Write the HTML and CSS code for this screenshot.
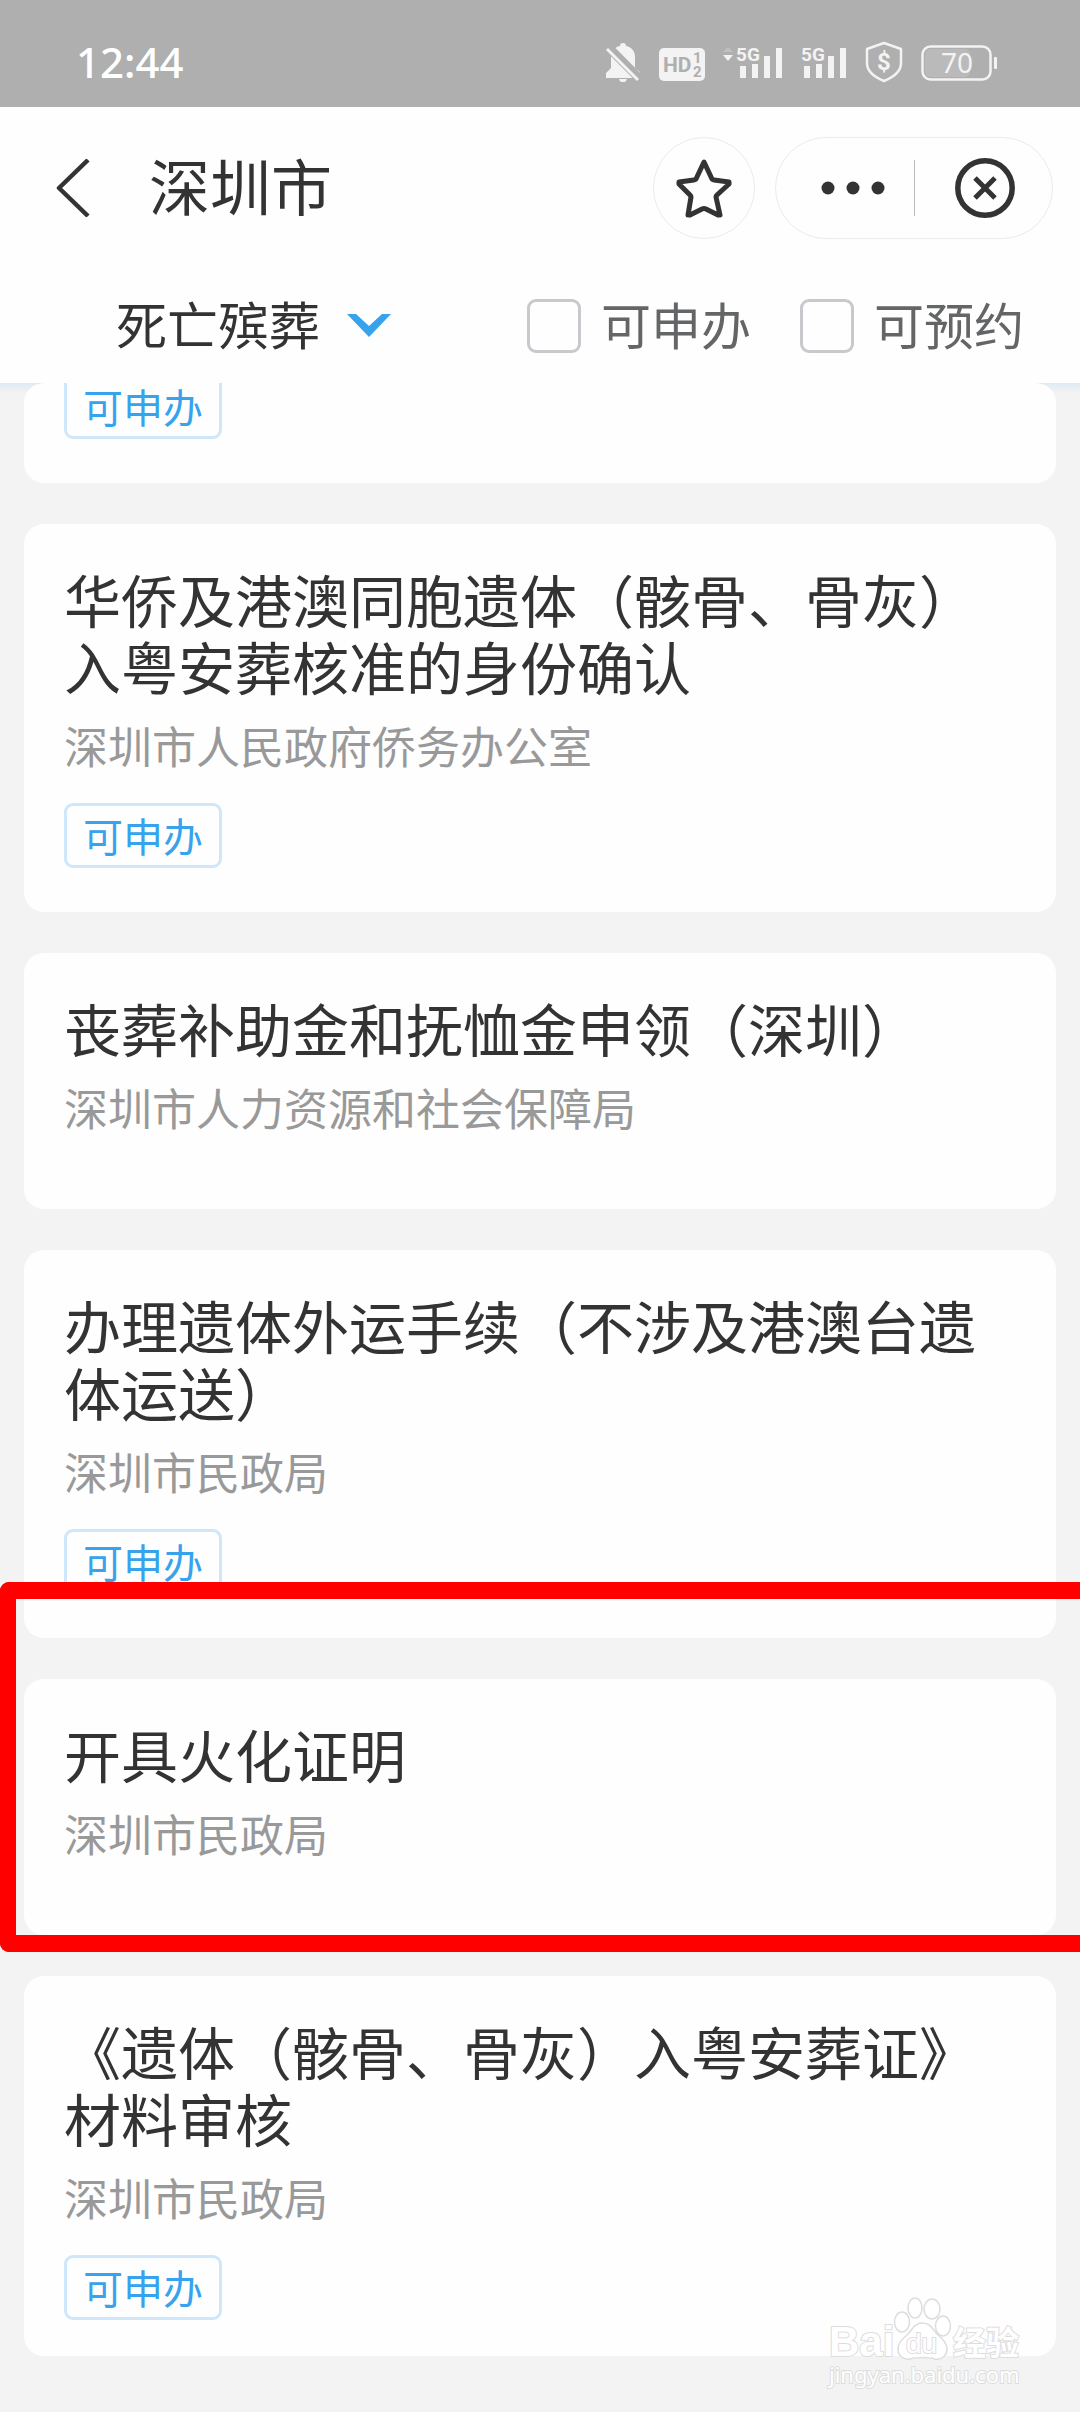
FILE: index.html
```html
<!DOCTYPE html>
<html lang="zh-CN">

<head>
    <meta charset="UTF-8">
    <meta name="viewport" content="width=device-width">
    <title>深圳市</title>
    <link rel="stylesheet" href="styles.css">
</head>

<body>
    <div class="status">
        <span class="time">12:44</span>
        <div class="status-icons">
            <!-- muted -->
            <svg width="35" height="42" viewBox="0 0 35 42">
                <path fill="#f3f3f3" d="M17 2c2 0 3 1 3 3 6 1 9 6 9 11v11l5 4v6H0v-5l5-5V16c0-5 3-10 9-11 0-2 1-3 3-3zM13 38h8c-1 3-2 3-4 3s-3 0-4-3z"/>
                <path stroke="#afafaf" stroke-width="9" d="M2 6l34 34"/>
                <path stroke="#f3f3f3" stroke-width="3" d="M1 8l31 31"/>
            </svg>
            <svg width="46" height="42" viewBox="0 0 46 42">
                <rect y="7" width="46" height="33" rx="5" fill="#f3f3f3"/>
                <text class="hd" x="4" y="31">HD</text>
                <text class="hd-num" x="34" y="22">1</text>
                <text class="hd-num" x="34" y="36">2</text>
            </svg>
            <!-- signal -->
            <svg width="60" height="42" viewBox="0 0 60 42">
                <path fill="#c0c0c0" d="M0 11l5-5 5 5z"/>
                <path fill="#f3f3f3" d="M0 14h10l-5 6z"/>
                <text class="net" x="13" y="20">5G</text>
                <path fill="#f3f3f3" d="M17 25h6v12h-6zM29 23h6v14h-6zM41 15h6v22h-6zM53 7h6v30h-6z"/>
            </svg>
            <svg width="46" height="42" viewBox="0 0 46 42">
                <text class="net" x="0" y="20">5G</text>
                <path fill="#f3f3f3" d="M3 25h6v12H3zM15 23h6v14h-6zM27 15h6v22h-6zM39 7h6v30h-6z"/>
            </svg>
            <svg width="38" height="42" viewBox="0 0 38 42">
                <path fill="none" stroke="#f3f3f3" stroke-width="2.5" stroke-linejoin="round" d="M19 2l17 6v14c0 9-7 14-17 18C9 36 2 31 2 22V8z"/>
                <text class="coin" x="19" y="29">$</text>
            </svg>
            <!-- battery -->
            <svg width="76" height="42" viewBox="0 0 76 42">
                <rect x="4" y="8" width="45" height="28" rx="5" fill="#bababa"/>
                <rect x="1.5" y="5.5" width="68" height="33" rx="8" fill="none" stroke="#f3f3f3" stroke-width="2.5"/>
                <rect x="73" y="16" width="3" height="12" rx="1" fill="#f3f3f3"/>
                <text class="level" x="36" y="32">70</text>
            </svg>
        </div>
    </div>

    <header class="header">
        <div class="nav">
            <button class="back" type="button" aria-label="返回">
                <svg width="34" height="58" viewBox="0 0 34 58"><path fill="none" stroke="#333" stroke-width="4.5" stroke-linejoin="round" d="M32 1L3 29l29 28"/></svg>
            </button>
            <h1 class="nav-title">深圳市</h1>
            <button class="star" type="button" aria-label="收藏">
                <svg width="56" height="60" viewBox="0 0 56 60"><path fill="none" stroke="#333" stroke-width="5" stroke-linejoin="round" d="M28 4l8 17q1 1 2 1l15 2v2L41 37q-1 1-1 2l4 18h-2l-12-6q-2-1-4 0l-12 6h-2l3-18q0-1-1-2L3 26v-2l15-2q1 0 2-1z"/></svg>
            </button>
            <div class="capsule">
                <button class="more" type="button" aria-label="更多">
                    <svg width="66" height="16" viewBox="0 0 66 16" fill="#333"><circle cx="8" cy="8" r="6.5"/><circle cx="33" cy="8" r="6.5"/><circle cx="58" cy="8" r="6.5"/></svg>
                </button>
                <button class="close" type="button" aria-label="关闭">
                    <svg width="60" height="60" viewBox="0 0 60 60" fill="none" stroke="#333"><circle cx="30" cy="30" r="27.2" stroke-width="5.5"/><path stroke-width="5" d="M20 20l20 20M40 20L20 40"/></svg>
                </button>
            </div>
        </div>
        <div class="filter">
            <button class="category" type="button">
                <span class="filter-text">死亡殡葬</span>
                <svg width="44" height="24" viewBox="0 0 44 24"><path fill="#36a3ec" d="M0 0h9l13 12L35 0h9L22 23z"/></svg>
            </button>
            <label class="check"><input type="checkbox"><span class="filter-text">可申办</span></label>
            <label class="check"><input type="checkbox"><span class="filter-text">可预约</span></label>
        </div>
    </header>

    <main class="list">
        <div class="card card-cut">
            <span class="tag">可申办</span>
        </div>
        <div class="card">
            <h2 class="title">华侨及港澳同胞遗体（骸骨、骨灰）入粤安葬核准的身份确认</h2>
            <p class="dept">深圳市人民政府侨务办公室</p>
            <span class="tag">可申办</span>
        </div>
        <div class="card">
            <h2 class="title">丧葬补助金和抚恤金申领（深圳）</h2>
            <p class="dept">深圳市人力资源和社会保障局</p>
        </div>
        <div class="card">
            <h2 class="title">办理遗体外运手续（不涉及港澳台遗体运送）</h2>
            <p class="dept">深圳市民政局</p>
            <span class="tag">可申办</span>
        </div>
        <div class="card">
            <h2 class="title">开具火化证明</h2>
            <p class="dept">深圳市民政局</p>
            <div class="mark"></div>
        </div>
        <div class="card card-last">
            <h2 class="title">《遗体（骸骨、骨灰）入粤安葬证》材料审核</h2>
            <p class="dept">深圳市民政局</p>
            <span class="tag">可申办</span>
            <svg class="watermark" width="200" height="100" viewBox="0 0 200 100">
                <text class="wm-name" x="3" y="61">Bai</text>
                <g fill="#fff" stroke="#ddd" stroke-width="1.5">
                    <ellipse cx="76" cy="27" rx="7.5" ry="10"/>
                    <ellipse cx="89" cy="13" rx="7" ry="10"/>
                    <ellipse cx="106" cy="14" rx="8" ry="10"/>
                    <ellipse cx="117" cy="31" rx="7.5" ry="10"/>
                    <path d="M96 28c9 0 11 7 16 12 6 5 9 9 9 14 0 7-6 11-12 10-6-2-19-2-25 0-6 1-12-3-12-10 0-5 3-9 8-13 6-5 8-13 16-13z"/>
                </g>
                <text class="wm-du" x="80" y="58">du</text>
                <text class="wm-cn" x="127" y="60">经验</text>
                <text class="wm-url" x="3" y="88">jingyan.baidu.com</text>
            </svg>
        </div>
    </main>
</body>

</html>
```

FILE: styles.css
```css
* {
    box-sizing: border-box;
}

body {
    margin: 0;
    background: #f3f3f3;
    color: #333;
    font-family: "Noto Sans CJK SC", "Noto Sans", sans-serif;
    overflow-x: hidden;
}

h1, h2, p {
    margin: 0;
    font-weight: 400;
}

button {
    padding: 0;
    border: 0;
    background: none;
    color: inherit;
    font: inherit;
}

svg {
    display: block;
}

/* status bar */
.status {
    display: flex;
    justify-content: space-between;
    align-items: center;
    height: 107px;
    padding: 16px 83px 0 76px;
    background: #afafaf;
}

.time {
    color: #fff;
    font: 500 42px/60px "Noto Sans", sans-serif;
}

.status-icons {
    display: flex;
    gap: 18px;
}

.hd, .hd-num, .net {
    font-family: "Liberation Sans Narrow", Roboto, sans-serif;
    font-weight: 700;
}

.hd {
    fill: #afafaf;
    font-size: 21px;
}

.hd-num {
    fill: #afafaf;
    font-size: 15px;
}

.net {
    fill: #f3f3f3;
    font-size: 19px;
}

.coin {
    fill: #f3f3f3;
    font: 700 24px Roboto, sans-serif;
    text-anchor: middle;
}

.level {
    fill: #f3f3f3;
    font: 400 28px "Noto Sans", sans-serif;
    text-anchor: middle;
}

/* header */
.header {
    background: #fefefe;
}

.nav {
    display: flex;
    align-items: center;
    padding: 30px 27px 30px 56px;
}

.nav-title {
    margin-left: 59px;
    padding-bottom: 6px;
    font-size: 61px;
    line-height: 80px;
}

.star {
    display: flex;
    justify-content: center;
    align-items: center;
    width: 102px;
    height: 102px;
    margin-left: auto;
    border: 1px solid #ebebeb;
    border-radius: 50%;
}

.capsule {
    display: flex;
    align-items: center;
    height: 102px;
    margin-left: 20px;
    border: 1px solid #ebebeb;
    border-radius: 51px;
}

.more {
    padding: 20px 28px 20px 44px;
    border-right: 1px solid #bbb;
}

.close {
    padding: 0 37px 0 40px;
}

.filter {
    display: flex;
    align-items: center;
    gap: 49px;
    height: 114px;
    padding: 0 56px 0 116px;
    font-size: 50px;
    line-height: 70px;
}

.filter-text {
    padding-bottom: 6px;
}

.category {
    display: flex;
    align-items: center;
    gap: 27px;
    margin-right: auto;
    font-size: 51px;
}

.check {
    display: flex;
    align-items: center;
    gap: 20px;
    color: #646566;
}

.check input {
    appearance: none;
    width: 54px;
    height: 54px;
    margin: 0;
    border: 3px solid #c8c9cc;
    border-radius: 9px;
}

/* list */
.list {
    display: flex;
    flex-direction: column;
    gap: 41px;
    padding: 0 24px 56px;
    background: linear-gradient(#deebf2, #f3f3f3 10px);
}

.card {
    position: relative;
    padding: 41px 40px 44px;
    border-radius: 20px;
    background: #fefefe;
}

/* scrolled under the header */
.card-cut {
    padding-top: 0;
    overflow: hidden;
}

.title {
    font-size: 57px;
    line-height: 67px;
}

.dept {
    margin: 16px 0 27px;
    color: #999;
    font-size: 44px;
    line-height: 61px;
}

.tag {
    display: block;
    width: fit-content;
    padding: 0 16px;
    border: 3px solid #cfe7fa;
    border-radius: 9px;
    color: #36a3ec;
    font-size: 40px;
    line-height: 59px;
}

.card-cut .tag {
    margin-top: -9px;
}

.card-last {
    padding-bottom: 36px;
}

.mark {
    position: absolute;
    z-index: 2;
    top: -97px;
    right: -24px;
    bottom: -17px;
    left: -24px;
    border: 17px solid #f00;
    border-right: 0;
    border-left-width: 16px;
    border-radius: 9px 0 0 9px;
}

.watermark {
    position: absolute;
    right: 30px;
    bottom: -39px;
    overflow: visible;
}

.watermark text {
    fill: #fff;
    stroke: #ddd;
    stroke-width: 2px;
    paint-order: stroke;
}

.watermark .wm-name {
    font: 700 42px "Liberation Sans", sans-serif;
}

.watermark .wm-du {
    font: 400 28px "Liberation Sans", sans-serif;
}

.watermark .wm-cn {
    font: 700 33px "Noto Sans CJK SC", sans-serif;
}

.watermark .wm-url {
    font: 400 22px "Noto Sans", sans-serif;
}
```
